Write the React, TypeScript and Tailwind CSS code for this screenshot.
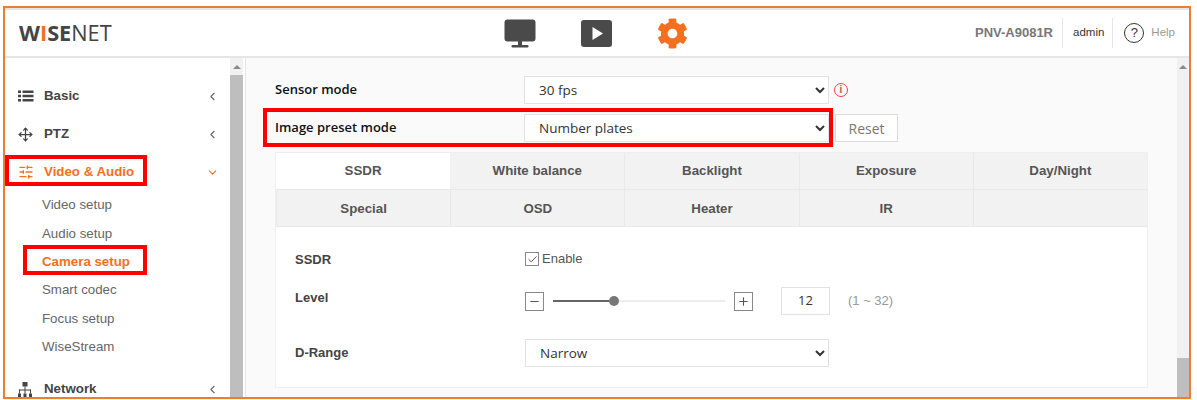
import React from 'react';
import { FaCog } from 'react-icons/fa';
import { ChevronLeft, ChevronDown, SlidersHorizontal, Move, Minus, Plus, Check } from 'lucide-react';

const SANS = "font-['Liberation_Sans',Arial,sans-serif]";
const OPEN = "font-['Open_Sans','Noto_Sans',sans-serif]";

const ListIcon = () => (
  <svg width="16" height="12" viewBox="0 0 16 12" fill="#444">
    <rect x="0" y="0.5" width="3" height="2.5" />
    <rect x="0" y="4.75" width="3" height="2.5" />
    <rect x="0" y="9" width="3" height="2.5" />
    <rect x="4.5" y="0.5" width="11" height="2.5" />
    <rect x="4.5" y="4.75" width="11" height="2.5" />
    <rect x="4.5" y="9" width="11" height="2.5" />
  </svg>
);

const NetworkIcon = () => (
  <svg width="14" height="15" viewBox="0 0 14 15" fill="#444">
    <rect x="4.5" y="0" width="5" height="4.5" />
    <rect x="6.5" y="4.5" width="1" height="7" />
    <rect x="1" y="7.5" width="12" height="1" />
    <rect x="1" y="7.5" width="1" height="4" />
    <rect x="12" y="7.5" width="1" height="4" />
    <rect x="0" y="11.5" width="3" height="3.5" />
    <rect x="5.5" y="11.5" width="3" height="3.5" />
    <rect x="11" y="11.5" width="3" height="3.5" />
  </svg>
);

const MonitorIcon = () => (
  <svg width="32" height="29" viewBox="0 0 32 29" fill="#4a4a4a">
    <rect x="0.5" y="0.5" width="31" height="22" rx="3" />
    <rect x="14" y="22" width="4" height="4" />
    <rect x="7.5" y="26" width="17" height="2.5" rx="1" />
  </svg>
);

const PlayIcon = () => (
  <svg width="31" height="27" viewBox="0 0 31 27">
    <rect x="0" y="0" width="31" height="27" rx="3" fill="#4a4a4a" />
    <path d="M11.5 7 L22 13.5 L11.5 20 Z" fill="#fff" />
  </svg>
);

interface MenuProps {
  icon: React.ReactNode;
  label: string;
  active?: boolean;
}

const MenuItem: React.FC<MenuProps> = ({ icon, label, active }) => (
  <div className="flex h-[38px] items-center pl-[13px] pr-[11px]">
    <span className="flex w-[26px] items-center">{icon}</span>
    <span className={`text-[13.3px] font-bold ${active ? 'text-[#f37021]' : 'text-[#444]'}`}>{label}</span>
    <span className="ml-auto">
      {active ? (
        <ChevronDown size={13} color="#f37021" />
      ) : (
        <ChevronLeft size={13} color="#666" />
      )}
    </span>
  </div>
);

const SubItem = ({ label, active }: { label: string; active?: boolean }) => (
  <div className={`flex h-[28.4px] items-center pl-[37px] text-[13.3px] ${active ? 'font-bold text-[#f37021]' : 'text-[#666]'}`}>
    {label}
  </div>
);

const Scrollbar = ({ thumbClass, width }: { thumbClass: string; width: string }) => (
  <div className={`flex shrink-0 flex-col items-center bg-[#f1f1f1] ${width}`}>
    <div className="flex h-[17px] items-center justify-center">
      <div className="h-0 w-0 border-x-[4px] border-b-[4px] border-x-transparent border-b-[#8a8a8a]" />
    </div>
    <div className={`w-full bg-[#bebebe] ${thumbClass}`} />
  </div>
);

const Select = ({ value, w }: { value: string; w: string }) => (
  <select
    defaultValue={value}
    className={`h-[28px] rounded-none border border-[#e2e2e2] bg-white pl-[10px] text-[13.5px] text-[#333] ${OPEN} ${w}`}
  >
    <option>{value}</option>
  </select>
);

const tabs = ['SSDR', 'White balance', 'Backlight', 'Exposure', 'Day/Night', 'Special', 'OSD', 'Heater', 'IR', ''];

export default function App() {
  return (
    <div className={`h-[400px] w-[1197px] bg-white pl-[3px] pt-[6px] ${SANS}`}>
      <div className="flex h-[393px] w-[1188px] flex-col overflow-hidden border-2 border-[#ed7d31]">
        {/* top bar */}
        <header className="relative flex h-[50px] shrink-0 items-center border-y-2 border-y-[#e6e6e6] bg-white pr-[14px]">
          <div className={`ml-[14px] flex items-baseline text-[21.7px] leading-none text-[#444] ${OPEN}`}>
            <span className="font-bold">W</span>
            <span className="font-bold text-[#f37021]">I</span>
            <span className="font-bold">SE</span>
            <span className="font-normal">NET</span>
          </div>
          <div className="ml-[392px] flex items-center">
            <MonitorIcon />
            <div className="ml-[45px]"><PlayIcon /></div>
            <FaCog size={31} color="#f37021" className="ml-[45px]" />
          </div>
          <div className="ml-auto flex h-[30px] items-center">
            <span className="pr-[9px] text-[13px] font-bold text-[#777]">PNV-A9081R</span>
            <span className="flex h-full items-center border-x border-x-[#e6e6e6] pl-[10px] pr-[8px] text-[11.5px] text-[#333]">admin</span>
            <span className="ml-[11px] flex h-[20px] w-[20px] items-center justify-center rounded-full border-[1.5px] border-[#333] text-[13px] text-[#333]">?</span>
            <span className="ml-[7px] text-[11.5px] text-[#999]">Help</span>
          </div>
        </header>

        <div className="flex min-h-0 flex-1">
          {/* left menu */}
          <aside className="w-[225px] shrink-0 overflow-hidden bg-white pt-[19px]">
            <MenuItem icon={<ListIcon />} label="Basic" />
            <MenuItem icon={<Move size={15} color="#444" strokeWidth={2} />} label="PTZ" />
            <MenuItem icon={<SlidersHorizontal size={16} color="#f37021" />} label="Video & Audio" active />
            <div className="pb-[9px]">
              <SubItem label="Video setup" />
              <SubItem label="Audio setup" />
              <SubItem label="Camera setup" active />
              <SubItem label="Smart codec" />
              <SubItem label="Focus setup" />
              <SubItem label="WiseStream" />
            </div>
            <MenuItem icon={<NetworkIcon />} label="Network" />
          </aside>
          <Scrollbar width="w-[13px]" thumbClass="flex-1" />

          {/* settings panel */}
          <main className="ml-[2px] flex min-w-0 flex-1 border-l border-l-[#e6e6e6] bg-[#fafafa]">
            <div className="w-[930px] shrink-0 pl-[29px] pt-[18px]">
              <div className="flex h-[28px] items-center">
                <span className={`w-[249px] text-[13px] font-semibold text-[#111] ${OPEN}`}>Sensor mode</span>
                <Select value="30 fps" w="w-[305px]" />
                <span className="ml-[5px] flex h-[14px] w-[14px] items-center justify-center rounded-full border border-[#ef4444] text-[10px] font-bold leading-none text-[#ef4444]">i</span>
              </div>
              <div className="mt-[10px] flex h-[28px] items-center">
                <span className={`w-[249px] text-[13px] font-semibold text-[#111] ${OPEN}`}>Image preset mode</span>
                <Select value="Number plates" w="w-[305px]" />
                <button className={`ml-[6px] h-[28px] w-[63px] border border-[#dcdcdc] bg-white text-[14px] text-[#777] ${OPEN}`}>Reset</button>
              </div>

              <div className="mt-[10px] w-[873px] border border-[#efefef] bg-white">
                <div className="grid grid-cols-5 grid-rows-[36px_38px]">
                  {tabs.map((t, i) => (
                    <div
                      key={i}
                      className={`flex items-center justify-center text-[13.3px] font-bold text-[#555] ${i === 0 ? 'bg-white' : 'bg-[#f2f2f2]'} ${i !== 0 && i !== 1 ? 'border-l border-l-[#e9e9e9]' : ''} ${i >= 5 ? 'border-y border-y-[#e9e9e9] pt-[1px]' : ''}`}
                    >
                      {t}
                    </div>
                  ))}
                </div>
                <div className="h-[160px] pl-[19px]">
                  <div className="flex h-[60px] items-center pt-[6px]">
                    <span className="w-[230px] text-[13px] font-bold text-[#444]">SSDR</span>
                    <span className="-mt-[2px] flex h-[14px] w-[14px] items-center justify-center border border-[#888]">
                      <Check size={11} color="#444" strokeWidth={2} />
                    </span>
                    <span className="-mt-[2px] ml-[3px] text-[13px] text-[#555]">Enable</span>
                  </div>
                  <div className="flex h-[28px] items-center">
                    <span className="-mt-[6px] w-[230px] text-[13px] font-bold text-[#444]">Level</span>
                    <span className="flex h-[19px] w-[19px] items-center justify-center border border-[#888]">
                      <Minus size={13} color="#555" />
                    </span>
                    <div className="ml-[9px] flex h-[10px] w-[172px] items-center">
                      <div className="h-[2px] w-[56px] bg-[#666]" />
                      <div className="h-[10px] w-[10px] shrink-0 rounded-full bg-[#777]" />
                      <div className="h-[2px] flex-1 bg-[#ececec]" />
                    </div>
                    <span className="ml-[9px] flex h-[19px] w-[19px] items-center justify-center border border-[#888]">
                      <Plus size={13} color="#555" />
                    </span>
                    <div className={`ml-[28px] flex h-[28px] w-[49px] items-center justify-center border border-[#e2e2e2] text-[13px] text-[#333] ${OPEN}`}>12</div>
                    <span className="ml-[18px] text-[13px] text-[#999]">(1 ~ 32)</span>
                  </div>
                  <div className="mt-[24px] flex h-[28px] items-center">
                    <span className="w-[230px] text-[13px] font-bold text-[#444]">D-Range</span>
                    <Select value="Narrow" w="w-[304px]" />
                  </div>
                </div>
              </div>
            </div>
            <div className="ml-auto flex h-full">
              <Scrollbar width="w-[12px]" thumbClass="mt-[283px] flex-1" />
            </div>
          </main>
        </div>
      </div>

      {/* red callouts drawn over the screenshot */}
      <div className="absolute left-[5px] top-[155px] h-[31px] w-[142px] border-[4px] border-[#ff0000]" />
      <div className="absolute left-[23px] top-[245px] h-[30px] w-[124px] border-[4px] border-[#ff0000]" />
      <div className="absolute left-[263px] top-[108px] h-[39px] w-[570px] border-[4px] border-[#ff0000]" />
    </div>
  );
}
